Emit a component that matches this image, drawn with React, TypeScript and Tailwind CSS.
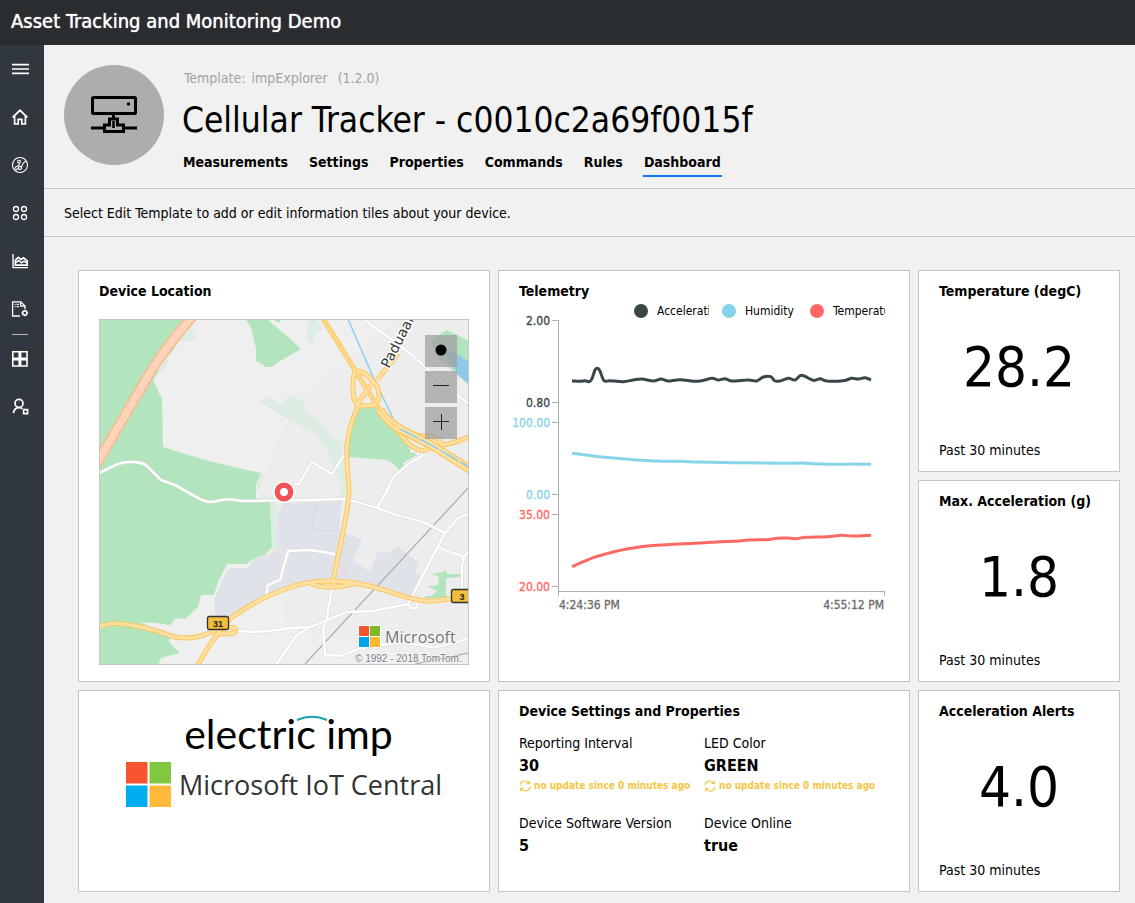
import React from "react";

const fontUi = "font-['DejaVu_Sans_Condensed','Noto_Sans',sans-serif]";

type Pt = [number, number];

function smooth(points: Pt[]): string {
  let d = `M${points[0][0]} ${points[0][1]}`;
  for (let i = 0; i < points.length - 1; i++) {
    const a = points[Math.max(i - 1, 0)];
    const b = points[i];
    const c = points[i + 1];
    const e = points[Math.min(i + 2, points.length - 1)];
    d += ` C${b[0] + (c[0] - a[0]) / 6} ${b[1] + (c[1] - a[1]) / 6} ${c[0] - (e[0] - b[0]) / 6} ${c[1] - (e[1] - b[1]) / 6} ${c[0]} ${c[1]}`;
  }
  return d;
}

/* ---------- Sidebar ---------- */

const navIcons: { label: string; icon: React.ReactNode }[] = [
  { label: "Menu", icon: <path d="M2 5.6h17M2 10h17M2 14.4h17" strokeWidth="1.6" /> },
  {
    label: "Home",
    icon: <path d="M2.6 10.4 10 3.3l7.4 7.1M4.6 9v8h3.6v-4.6h3.6V17h3.6V9" strokeWidth="1.7" />,
  },
  {
    label: "Device Explorer",
    icon: (
      <g strokeWidth="1.1">
        <circle cx="10" cy="10" r="7.5" />
        <circle cx="9" cy="6.6" r="1.4" />
        <circle cx="10" cy="13" r="1.6" />
        <path d="M9.2 8c.4 1.6-.2 2.4-1.6 2.9-1.8.6-2.6 1.6-3.2 3.4M5.2 15.6 8.5 13M11.3 12c1-.7.6-2.300 1.700-3.400L15.800 5.600" />
      </g>
    ),
  },
  {
    label: "Device Sets",
    icon: (
      <g strokeWidth="1.3">
        <circle cx="6" cy="6" r="2.5" />
        <circle cx="14" cy="6" r="2.5" />
        <circle cx="6" cy="14" r="2.5" />
        <circle cx="14" cy="14" r="2.5" />
      </g>
    ),
  },
  {
    label: "Analytics",
    icon: (
      <g>
        <path d="M3 3v13.6h15" strokeWidth="1.4" />
        <path d="M5.4 14.2V9.2L8.400 6.400l2.600 2.200 2.600-1.800 3.600 3v4.400z" strokeWidth="1.8" />
        <path d="m5.4 11.600 3.200-2 3 2.200 2.400-1.600 3 2" strokeWidth="1.4" />
      </g>
    ),
  },
  {
    label: "Jobs",
    icon: (
      <g strokeWidth="1.3">
        <path d="M10 17H2.6V2.8h8.2L15 7v3M10.6 3v4.2H15" />
        <path d="M4.6 5.4h1M6.6 5.4h2.2M4.6 7.6h1M6.6 7.6h2.2" />
        <circle cx="14.8" cy="14" r="2" />
        <path d="M14.8 10.7v1.3M14.8 16v1.3M11.5 14h1.3M16.8 14h1.3M12.5 11.7l.9.9M16.2 15.4l.9.9M12.5 16.3l.9-.9M16.2 12.6l.9-.9" />
      </g>
    ),
  },
  {
    label: "Application Builder",
    icon: <path d="M2.8 2.8h6.4v6.4H2.8zM10.6 2.8H17v6.4h-6.4zM2.8 10.6h6.4V17H2.8zM10.6 10.6H17V17h-6.4z" strokeWidth="1.6" />,
  },
  {
    label: "Administration",
    icon: (
      <g strokeWidth="1.7">
        <circle cx="9" cy="6.4" r="4" />
        <path d="M3.4 16c.5-3 2.600-5.400 5.600-5.400 1.400 0 2.600.5 3.400 1.200" />
        <path d="M13.600 12.600h4v4h-4z" strokeWidth="1.6" />
      </g>
    ),
  },
];

function Sidebar() {
  return (
    <nav aria-label="Main" className="flex w-11 shrink-0 flex-col bg-[#31373f]">
      {navIcons.map(({ label, icon }, i) => (
        <React.Fragment key={label}>
          {i === 6 && <div className="mt-px ml-3 h-px w-4 bg-[#b5b9bd]" />}
          <button type="button" aria-label={label} className="flex h-12 w-10 items-center justify-center">
            <svg viewBox="0 0 20 20" className="size-5" fill="none" stroke="#fff">
              {icon}
            </svg>
          </button>
        </React.Fragment>
      ))}
    </nav>
  );
}

/* ---------- Tiles ---------- */

function Tile({ title, className = "py-[10px]", children }: { title?: string; className?: string; children: React.ReactNode }) {
  return (
    <section className={`flex min-w-0 flex-col border border-[#c6c6c6] bg-white px-5 ${className}`}>
      {title && <h2 className="text-[14px] leading-5 font-bold whitespace-nowrap">{title}</h2>}
      {children}
    </section>
  );
}

function ValueTile({ title, value }: { title: string; value: string }) {
  return (
    <Tile title={title}>
      <p className="flex flex-1 items-center justify-center pb-2 text-[56px] leading-[64px]">{value}</p>
      <p className="pb-px text-[14px] leading-5">Past 30 minutes</p>
    </Tile>
  );
}

const arterials = [
  "M223 -2 256 51 281 91C288 101 294 106 301 110L334 127 372 151",
  "M259 87C254 98 250 108 248 126 247 145 249 156 250 170 250 185 246 203 243 218L234 262",
  "M278 61 300 34",
  "M256 51C253 62 254 74 255 80L259 87C266 87 270 87 275 86 281 82 281 75 278 67 273 62 270 54 256 51",
  "M275 62 259 84",
  "M372 117C358 122 352 126 340 126L324 132C313 130 306 122 296 108M310 114C324 120 330 114 340 121L343 126",
  "M-1 308C8 305 14 303 30 306 50 308 62 314 76 318 96 322 110 314 124 308L132 299C152 284 174 274 195 267 212 262 220 262 236 262 276 264 296 277 320 281 338 284 350 279 372 276",
  "M98 348C106 332 114 320 126 306M124 309C134 307 139 309 136 313 133 317 126 313 119 315",
  "M212 265C226 270 244 268 258 264",
];

const streets = [
  "M0 154 19 145C28 142 42 142 48 147L62 161 76 166 99 179C106 183 112 184 118 182 132 178 136 182 146 182L248 180 278 189 298 196 324 203 346 214",
  "M196 165H200L213 143 233 155 243 139 248 137",
  "M266 1 273 7 298 24 314 37 341 61 358 76 372 86",
  "M284 180 294 159C302 150 312 143 323 137 325 130 318 127 312 133",
  "M278 189 291 166",
  "M372 194 359 199 346 214 338 229 319 266 309 285C312 292 320 290 318 284",
  "M338 228 365 238 363 246V276M365 238 372 228",
  "M181 261 189 232 211 231 236 235M189 233 181 261 169 266 167 276",
  "M233 268 228 299 224 309 226 336 241 337 262 329 302 323 332 328C348 328 360 322 372 318",
  "M309 285 274 292 248 293 209 309 196 318 177 346",
  "M181 310 209 308M139 312 156 313 190 310M190 327 177 346",
];

function LocationMap() {
  return (
    <div className="relative mt-[18px] mb-[6px] min-h-0 flex-1 overflow-hidden border border-[#c4c8c6]">
      <svg viewBox="1 1 368 344" preserveAspectRatio="xMidYMid slice" className="size-full" role="img" aria-label="Map of the device location">
        <rect width="370" height="346" fill="#efefef" />
        <path d="M189 104C176 122 168 150 164 172L160 184 190 310 370 346V0H300L190 90z" fill="#ededed" />
        <path d="M0 0H95L54 61 60 74 63 79 64 128 83 134 110 142 135 148 162 154 157 166 157 178 171 182 173 228 166 236 156 239 147 245H128L119 263 115 276H102L99 288 86 300 77 299 71 306 56 304 41 303 71 318 70 323 81 334 62 339 59 346H0z" fill="#b2e4be" />
        <g fill="#deede3">
          <path d="M79 22H98L92 9 94 0zM72 30 67 49 62 53 56 52zM162 155 165 156 160 172H157zM171 182 180 186 176 200V219L183 234 173 228z" />
          <path d="M160 82 169 77 181 86 191 76 204 82 206 92 221 102 230 111 233 119 241 121 244 137 248 182 158 180 157 178H241L242 162 236 152 229 132 221 124 219 116 190 101zM209 1 208 22 214 24 216 14 224 11 218 1z" />
        </g>
        <g fill="#b2e4be">
          <path d="M147 1 152 9 157 29V42L165 46V48L172 48 181 42 202 30 188 17 169 1zM176 0H181V3H177z" />
          <path d="M259 88 274 86 281 94 296 111 309 124 311 131 318 136 304 144 306 150 302 154 296 146 288 141 250 138 249 122 254 99z" />
          <path d="M331 22 338 17 348 11 354 14 370 22V66L354 52 340 40z" />
          <path d="M332 255 344 253 346 251 348 255 361 255V258L347 259V276L350 279H326V277H333L338 272 328 267 339 266 340 258z" />
        </g>
        <path d="M343 30 356 34 370 43V65L358 55 354 46z" fill="#8fc8e8" />
        <path d="M178 195 184 184 243 182 240 211 263 221 254 241 271 253 279 232 289 234 299 227 320 244 316 253 323 257 314 277 300 274 271 266 234 262 201 264 166 279 131 298 117 301 115 281 127 253 132 249H149L156 239 169 236 176 231 183 234 176 219z" fill="#dfe2e8" />
        <path d="M239 246 249 251V258L242 256z" fill="#ead9de" opacity=".7" />
        <path d="M218 185 212 210 230 212 243 211" fill="none" stroke="#cdd0d6" strokeWidth=".6" />
        <path d="M370 168 206 345M316 345 370 334" fill="none" stroke="#ababab" strokeWidth="1.2" />
        <g fill="none" strokeLinejoin="round">
          {streets.map((d) => (
            <path key={d} d={d} stroke="#dcdcdc" strokeWidth="3.4" />
          ))}
          {streets.map((d) => (
            <path key={d} d={d} stroke="#fff" strokeWidth="2.3" />
          ))}
          <path d="M249 0 275 60 294 99" stroke="#92d2f2" strokeWidth="1.6" />
          <path d="M94 -3C74 20 60 38 49 57L-3 146" stroke="#fcbb93" strokeWidth="10.5" />
          <path d="M94 -3C74 20 60 38 49 57L-3 146" stroke="#fed4bb" strokeWidth="7" />
          {arterials.map((d) => (
            <path key={d} d={d} stroke="#fdc65a" strokeWidth="5" />
          ))}
          {arterials.map((d) => (
            <path key={d} d={d} stroke="#fee0a4" strokeWidth="3" />
          ))}
          <path d="M281 91C288 101 294 106 301 110L334 127 372 151" stroke="#fdc65a" strokeWidth="9" />
          <path d="M281 91C288 101 294 106 301 110L334 127 372 151" stroke="#fee0a4" strokeWidth="6.4" />
          <path d="M223 -2 256 51 281 91C288 101 294 106 301 110L334 127 372 151" stroke="#fdc65a" strokeWidth="1" />
          <path d="M301 110 334 127 372 149" stroke="#92d2e8" strokeWidth="1.8" strokeDasharray="20 3" />
        </g>
        <text transform="translate(290 50) rotate(-63)" fontSize="14" className="font-['DejaVu_Sans',sans-serif]" fill="#333" stroke="#fff" strokeWidth="2.5" paintOrder="stroke">
          Paduaall
        </text>
        <g fontSize="9" fontWeight="700" textAnchor="middle" className="font-['Liberation_Sans',sans-serif]">
          <rect x="108.500" y="297.500" width="21" height="13" rx="2" fill="#f2bd3a" stroke="#333" strokeWidth="1.3" />
          <text x="119" y="307.500" fill="#222">31</text>
          <rect x="352.500" y="270.500" width="21" height="13" rx="2" fill="#f2bd3a" stroke="#333" strokeWidth="1.3" />
          <text x="363" y="280.500" fill="#222">3</text>
        </g>
        <circle cx="185" cy="173" r="10.800" fill="#fff" />
        <circle cx="185" cy="173" r="6.700" fill="#fff" stroke="#ef5357" strokeWidth="5.400" />
        <path d="M259 306h23v23h-23z" fill="#fff" />
        <path d="M260 307h10v10h-10z" fill="#f65530" />
        <path d="M271 307h10v10h-10z" fill="#7db82c" />
        <path d="M260 318h10v10h-10z" fill="#00a3ee" />
        <path d="M271 318h10v10h-10z" fill="#fcb834" />
        <text x="286" y="324" fontSize="16" fontWeight="500" fill="#707070" stroke="#fff" strokeWidth="1.500" paintOrder="stroke" className="font-['Open_Sans',sans-serif]">
          Microsoft
        </text>
        <text x="256" y="343" fontSize="10" fill="#777" stroke="#fff" strokeWidth="1" paintOrder="stroke" className="font-['Liberation_Sans',sans-serif]">
          © 1992 - 2018 TomTom.
        </text>
      </svg>
      <div className="absolute top-[15px] right-[11px] flex flex-col gap-1">
        {[
          { label: "Center map", icon: <circle cx="16" cy="15" r="5.5" fill="#000" stroke="none" /> },
          { label: "Zoom out", icon: <path d="M8 14.500h16" /> },
          { label: "Zoom in", icon: <path d="M8 14.500h16M16.500 7v16" /> },
        ].map(({ label, icon }) => (
          <button key={label} type="button" aria-label={label} className="size-8 bg-[#a0a0a0]/75">
            <svg viewBox="0 0 32 32" className="size-8" fill="none" stroke="#222">
              {icon}
            </svg>
          </button>
        ))}
      </div>
    </div>
  );
}

const series: { name: string; color: string; points: Pt[] }[] = [
  {
    name: "Acceleration",
    color: "#39474b",
    points: [
      [216, 333], [240, 334], [255, 332], [268, 335], [276, 326], [285, 300], [292, 295], [300, 303], [312, 332], [330, 332],
      [370, 335], [400, 330], [425, 327], [460, 333], [483, 327], [505, 333], [540, 329], [595, 334], [635, 325], [655, 330],
      [675, 326], [695, 333], [745, 330], [770, 333], [790, 321], [812, 320], [825, 333], [840, 333], [865, 325], [885, 330],
      [905, 316], [940, 331], [960, 326], [980, 333], [1030, 332], [1055, 325], [1075, 327], [1095, 323], [1113, 330],
    ],
  },
  {
    name: "Humidity",
    color: "#85d4ea",
    points: [
      [216, 550], [280, 558], [340, 564], [400, 569], [470, 573], [540, 574], [600, 576], [700, 578], [800, 579], [860, 580],
      [905, 579], [940, 581], [1020, 583], [1060, 582], [1113, 583],
    ],
  },
  {
    name: "Temperature",
    color: "#ff6863",
    points: [
      [216, 890], [280, 863], [340, 846], [380, 837], [450, 827], [520, 823], [600, 819], [660, 815], [700, 814], [750, 810],
      [800, 809], [830, 805], [860, 804], [885, 806], [920, 802], [980, 800], [1025, 796], [1055, 798], [1113, 796],
    ],
  },
];

const axisTicks = [
  { y: 0, label: "2.00", color: "#39474b" },
  { y: 82, label: "0.80", color: "#39474b" },
  { y: 102, label: "100.00", color: "#85d4ea" },
  { y: 174, label: "0.00", color: "#85d4ea" },
  { y: 194, label: "35.00", color: "#ff6863" },
  { y: 266, label: "20.00", color: "#ff6863" },
];

function Telemetry() {
  return (
    <>
      <ul className="flex h-5 items-center justify-end gap-[13px] pr-1 text-[12px] leading-5">
        {series.map((s) => (
          <li key={s.name} className="flex items-center gap-[9px]">
            <span className="size-[14px] rounded-full" style={{ backgroundColor: s.color }} />
            <span className="w-[52px] overflow-hidden whitespace-nowrap">{s.name}</span>
          </li>
        ))}
      </ul>
      <svg viewBox="0 0 370 294" className="w-full overflow-visible" role="img" aria-label="Telemetry chart">
        <g fill="none" stroke="#b0b0b0">
          {axisTicks.map((t) => (
            <path key={t.label} d={`M33 ${t.y - 0.5}H39`} />
          ))}
          <path d="M39.500 -1V275.500M39.500 270.500H365.500V275.500" />
        </g>
        <g fontSize="12" textAnchor="end" strokeWidth=".3">
          {axisTicks.map((t) => (
            <text key={t.label} x="31" y={t.y + 4} fill={t.color} stroke={t.color}>
              {t.label}
            </text>
          ))}
          <text x="365" y="288" fill="#6b6b6b" stroke="#6b6b6b">
            4:55:12 PM
          </text>
          <text x="40" y="288" fill="#6b6b6b" stroke="#6b6b6b" textAnchor="start">
            4:24:36 PM
          </text>
        </g>
        <g transform="translate(-19 -51) scale(0.33333)" fill="none" strokeWidth="9" strokeLinejoin="round">
          {series.map((s) => (
            <path key={s.name} d={smooth(s.points)} stroke={s.color} />
          ))}
        </g>
      </svg>
    </>
  );
}

function Brands() {
  return (
    <Tile className="pt-[15px]">
      <div className="flex justify-center pl-[9px]">
        <div className="relative font-['Lato'] text-[41px] leading-[56px] whitespace-nowrap text-black">
          electric imp
          <svg viewBox="0 0 32 6" className="absolute top-[9px] left-[112px] w-8" fill="none">
            <path d="M1 5Q16 -1.500 31 5" stroke="#1aa3ad" strokeWidth="2" />
          </svg>
        </div>
      </div>
      <div className="flex items-center justify-center gap-2">
        <svg viewBox="0 0 45 45" className="size-[45px]" role="img" aria-label="Microsoft">
          <path d="M0 0h21.500v21.500H0z" fill="#f65530" />
          <path d="M23.500 0H45v21.500H23.500z" fill="#81c83f" />
          <path d="M0 23.500h21.500V45H0z" fill="#00adef" />
          <path d="M23.500 23.500H45V45H23.500z" fill="#ffb93b" />
        </svg>
        <span className="font-['Open_Sans',sans-serif] text-[27px] leading-[45px] whitespace-nowrap text-[#333]">Microsoft IoT Central</span>
      </div>
    </Tile>
  );
}

const properties = [
  { name: "Reporting Interval", value: "30", stale: true },
  { name: "LED Color", value: "GREEN", stale: true },
  { name: "Device Software Version", value: "5", stale: false },
  { name: "Device Online", value: "true", stale: false },
];

function SyncIcon() {
  return (
    <svg viewBox="0 0 12 12" className="size-3" fill="none" stroke="#f5c544" strokeWidth="1.200">
      <path d="M1 5.400A4.800 4.800 0 0 1 9.800 3.200M11 6.600A4.800 4.800 0 0 1 2.200 8.800M10.300 .8V3.600H7.500M1.700 11.200V8.400H4.500" />
    </svg>
  );
}

function Properties() {
  return (
    <dl className="mt-[10px] grid grid-cols-2 gap-y-4">
      {properties.map((p) => (
        <div key={p.name} className="h-16 whitespace-nowrap">
          <dt className="text-[14px] leading-6">{p.name}</dt>
          <dd className="pt-px">
            <div className="text-[16px] leading-5 font-bold">{p.value}</div>
            {p.stale && (
              <div className="flex items-center gap-[3px] text-[10px] leading-5 font-bold text-[#f5c544]">
                <SyncIcon />
                no update since 0 minutes ago
              </div>
            )}
          </dd>
        </div>
      ))}
    </dl>
  );
}

/* ---------- Page ---------- */

const tabs = ["Measurements", "Settings", "Properties", "Commands", "Rules", "Dashboard"];

function DeviceHeader() {
  return (
    <header className="flex items-start gap-[18px] border-b border-[#c8c8c8] px-5 pt-5 pb-[11px]">
      <div className="flex size-[100px] shrink-0 items-center justify-center rounded-full bg-[#adadad]">
        <svg viewBox="0 0 46 38" className="w-[46px]" fill="none" stroke="#000" strokeWidth="3">
          <rect x="1.500" y="1.500" width="43" height="16" rx="1" />
          <circle cx="37.500" cy="8" r="1.700" fill="#000" stroke="none" />
          <path d="M0 32h13M33 32h13M13.500 35.500v-6.500h5v-6h8v6h6v6.500zM22.500 18v5" />
          <path d="M22.500 25v7" strokeWidth="2.600" />
        </svg>
      </div>
      <div className="min-w-0 whitespace-nowrap">
        <p className="flex gap-[6px] pt-[3px] pl-[2px] text-[14px] leading-5 text-[#a3a3a3]">
          <span>Template:</span>
          <span>impExplorer</span>
          <span className="pl-1">(1.2.0)</span>
        </p>
        <h1 className="text-[35px] leading-[64px]">Cellular Tracker - c0010c2a69f0015f</h1>
        <nav aria-label="Device" className="flex gap-[19px]">
          {tabs.map((t) => (
            <a
              key={t}
              href="#"
              aria-current={t === "Dashboard" ? "page" : undefined}
              className={`border-b-2 px-px pb-[3px] text-[14px] leading-5 font-bold ${t === "Dashboard" ? "border-[#0f7bef]" : "border-transparent"}`}
            >
              {t}
            </a>
          ))}
        </nav>
      </div>
    </header>
  );
}

export default function App() {
  return (
    <div className={`flex min-h-screen flex-col bg-[#f1f1f1] text-black ${fontUi}`}>
      <div className="flex h-[45px] shrink-0 items-center bg-[#2a2d30] px-[11px] pb-[3px] text-[20px] leading-7 text-white text-shadow-[0_0_1px_#fff]">
        Asset Tracking and Monitoring Demo
      </div>
      <div className="flex flex-1">
        <Sidebar />
        <main className="min-w-0 flex-1">
          <DeviceHeader />
          <p className="border-b border-[#c8c8c8] px-5 pt-[14px] pb-3 text-[14px] leading-[21px]">
            Select Edit Template to add or edit information tiles about your device.
          </p>
          <div className="grid auto-rows-[202px] grid-cols-[412fr_412fr_202fr] gap-2 pt-[33px] pr-[15px] pb-[11px] pl-[34px]">
            <Tile title="Device Location" className="row-span-2 py-[10px]">
              <LocationMap />
            </Tile>
            <Tile title="Telemetry" className="row-span-2 py-[10px]">
              <Telemetry />
            </Tile>
            <ValueTile title="Temperature (degC)" value="28.2" />
            <ValueTile title="Max. Acceleration (g)" value="1.8" />
            <Brands />
            <Tile title="Device Settings and Properties">
              <Properties />
            </Tile>
            <ValueTile title="Acceleration Alerts" value="4.0" />
          </div>
        </main>
      </div>
    </div>
  );
}
